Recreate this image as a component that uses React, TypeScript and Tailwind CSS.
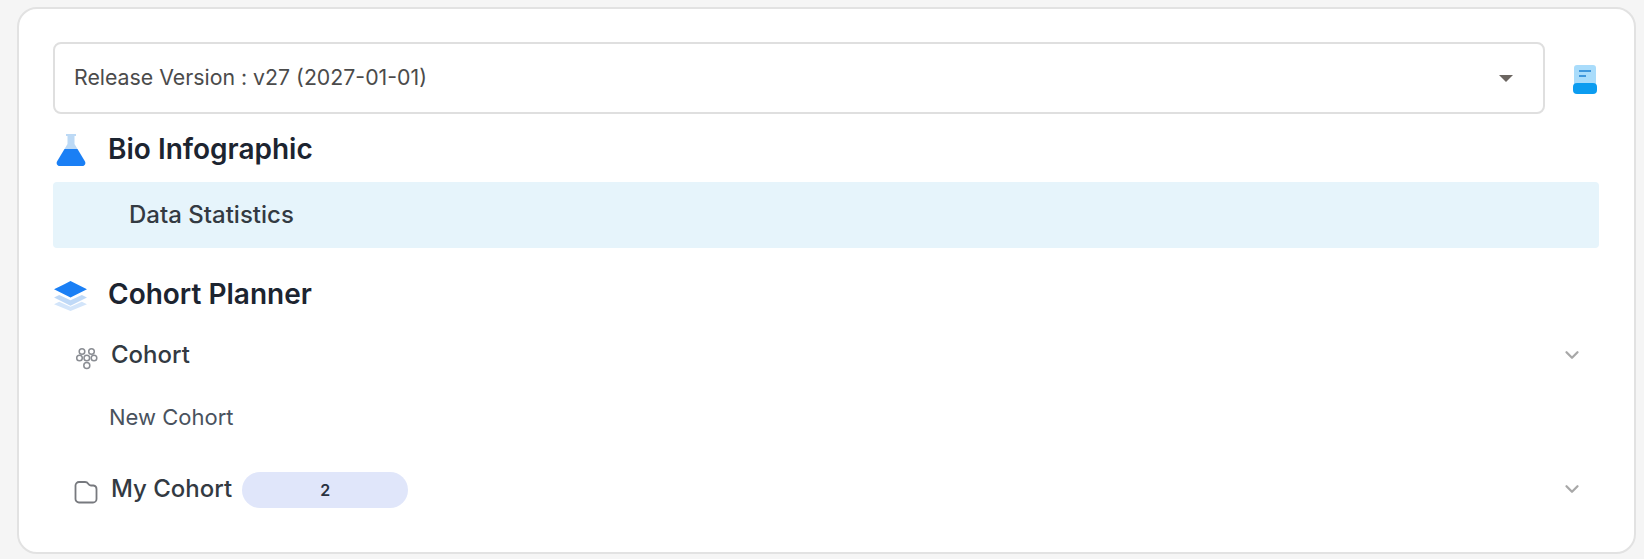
import { ChevronDown } from 'lucide-react';

const FlaskIcon = () => (
  <svg width="32" height="34" viewBox="0 0 32 34" className="mt-[2px] shrink-0">
    <path d="M11 1h10v2h-1.500v8l3 5H9.500l3-5V3H11z" fill="#bcd9f5" />
    <path d="M9.500 16h13l7.500 12.500c1 2-.2 4.500-2.500 4.500h-23c-2.300 0-3.500-2.500-2.500-4.500z" fill="#1a7ff5" />
  </svg>
);

const LayersIcon = () => (
  <svg width="35" height="35" viewBox="0 0 34 34" className="shrink-0">
    <path d="M1 20l5-2.500 11 5 11-5 5 2.500-16 8z" fill="#bfd9f7" />
    <path d="M1 26.500l5-2.500 11 5 11-5 5 2.500L17 33z" fill="#d3e5fa" />
    <path d="M1 12l5-2.500 5-2.500 6-3 16 8-16 8z" fill="#1a7ff5" />
  </svg>
);

const CohortIcon = () => (
  <svg width="24" height="24" viewBox="0 0 24 24" fill="none" stroke="#8a8d93" strokeWidth="1.500" className="mt-[6px] shrink-0">
    <circle cx="7" cy="5.500" r="2.800" />
    <circle cx="16.500" cy="5.500" r="2.800" />
    <circle cx="4.500" cy="12" r="2.800" />
    <circle cx="19" cy="12" r="2.800" />
    <circle cx="11.800" cy="12" r="2.800" />
    <circle cx="11.800" cy="19.500" r="3" />
  </svg>
);

const FolderIcon = () => (
  <svg width="24" height="24" viewBox="0 0 24 24" fill="none" stroke="#77797e" strokeWidth="1.800" className="mt-[4px] shrink-0">
    <path d="M1.500 5.500a3.500 3.500 0 0 1 3.500-3.500h6c1.500 0 2.500.6 3.200 1.800.7 1.200 1.300 1.700 2.800 1.700h2.500a3.500 3.500 0 0 1 3 3.500v10a3.500 3.500 0 0 1-3.500 3.500H5a3.500 3.500 0 0 1-3.500-3.500z" />
  </svg>
);

const BookIcon = () => (
  <svg width="24" height="29" viewBox="0 0 24 29" className="mt-[2px] shrink-0">
    <rect x="1" y="0" width="22" height="24" rx="3" fill="#a9dcfb" />
    <rect x="0" y="18" width="24" height="11" rx="4" fill="#0c9cf0" />
    <rect x="6" y="5" width="12" height="2" fill="#3f97dc" />
    <rect x="6" y="10" width="7" height="2" fill="#3f97dc" />
  </svg>
);

export default function App() {
  return (
    <div className="h-[559px] bg-[#f5f5f5] pt-[7px] pr-2 pl-[17px] font-['Inter',sans-serif]">
      <div className="h-[547px] rounded-[20px] border-2 border-[#e2e2e2] bg-white px-[34px] pt-[33px]">
        <div className="flex items-center">
          <div className="flex h-[72px] w-[1492px] items-center justify-between rounded-lg border-2 border-[#dfdfdf] pr-[30px] pl-[19px]">
            <span className="text-[21.300px] text-[#4b4b4b]">Release Version : v27 (2027-01-01)</span>
            <span className="h-0 w-0 border-x-[7px] border-t-[7px] border-x-transparent border-t-[#6b6560]" />
          </div>
          <div className="ml-[28px]">
            <BookIcon />
          </div>
        </div>

        <div className="mt-[18px] flex h-[34px] items-center gap-[21px] pl-[2px]">
          <FlaskIcon />
          <span className="text-[28px] font-semibold text-[#1c2430]">Bio Infographic</span>
        </div>
        <div className="mt-[16px] flex h-[66px] w-[1546px] items-center rounded bg-[#e6f4fb] pl-[76px]">
          <span className="text-2xl font-medium text-[#333a42]">Data Statistics</span>
        </div>

        <div className="mt-[29px] flex h-[34px] items-center gap-[20px]">
          <LayersIcon />
          <span className="text-[28px] font-semibold text-[#1c2430]">Cohort Planner</span>
        </div>

        <div className="mt-[27px] flex h-[34px] w-[1546px] items-center pr-[16px] pl-[22px]">
          <CohortIcon />
          <span className="ml-[12px] text-2xl font-medium text-[#333a42]">Cohort</span>
          <ChevronDown className="ml-auto text-[#a8a8a8]" size={22} strokeWidth={2.500} />
        </div>

        <div className="mt-[28px] pl-[56px] text-[22px] leading-[34px] text-[#49525e]">New Cohort</div>

        <div className="mt-[38px] flex h-[36px] w-[1546px] items-center pr-[16px] pl-[21px]">
          <FolderIcon />
          <span className="-mt-[2px] ml-[13px] text-2xl font-medium text-[#333a42]">My Cohort</span>
          <span className="ml-[10px] flex h-[36px] w-[166px] items-center justify-center rounded-full bg-[#e0e6fa] text-base font-semibold text-[#2a3240]">
            2
          </span>
          <ChevronDown className="ml-auto -mt-[3px] text-[#a8a8a8]" size={22} strokeWidth={2.500} />
        </div>
      </div>
    </div>
  );
}
